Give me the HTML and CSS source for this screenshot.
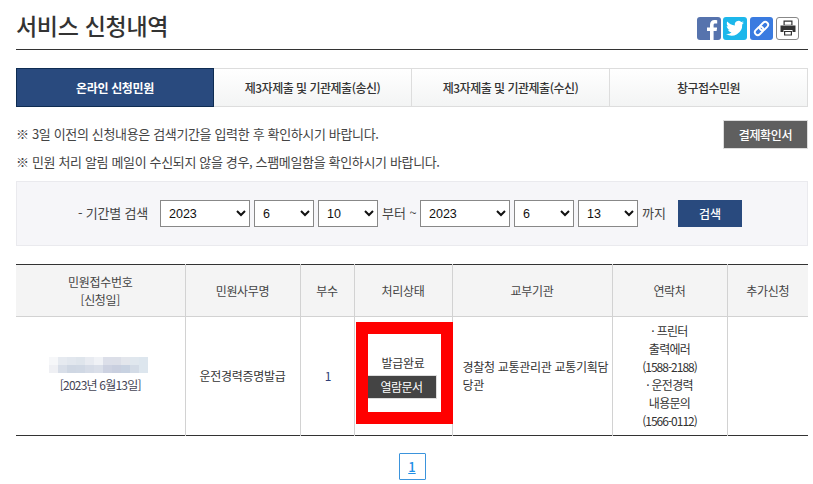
FILE: index.html
```html
<!DOCTYPE html>
<html lang="ko">
<head>
    <meta charset="UTF-8">
    <meta name="viewport" content="width=device-width, initial-scale=1.0">
    <title>서비스 신청내역</title>
    <link rel="stylesheet" href="styles.css">
</head>
<body>
    <div class="page">
        <div class="title-bar">
            <h2 class="page-title">서비스 신청내역</h2>
            <div class="share">
                <span class="share-btn fb">
                    <svg viewBox="0 0 24 24" width="24" height="24"><path fill="#fff" d="M16.6 24v-9h3l.5-3.6h-3.500V9.200c0-1 .3-1.700 1.800-1.700h1.800V4.300c-.4 0-1.500-.2-2.700-.2-2.700 0-4.500 1.700-4.500 4.600v2.700h-3V15h3v9z"/></svg>
                </span>
                <span class="share-btn tw">
                    <svg viewBox="0 0 24 24" width="24" height="24"><path fill="#fff" d="M21 6.600c-.7.300-1.400.5-2.100.6.800-.5 1.300-1.200 1.600-2-.7.400-1.500.7-2.300.9a3.700 3.700 0 0 0-6.300 3.400C8.800 9.300 6.100 7.800 4.300 5.600c-1 1.700-.5 3.800 1.100 4.900-.6 0-1.200-.2-1.700-.5 0 1.800 1.300 3.300 3 3.700-.5.100-1.100.2-1.700.1.500 1.500 1.800 2.500 3.500 2.600A7.500 7.500 0 0 1 3 17.900a10.500 10.500 0 0 0 16.200-9.300c.7-.5 1.300-1.200 1.800-2z"/></svg>
                </span>
                <span class="share-btn link">
                    <svg viewBox="0 0 24 24" width="23" height="23"><g fill="none" stroke="#fff" stroke-width="2" transform="rotate(-45 12 12)"><rect x="3.500" y="9" width="10" height="6" rx="3"/><rect x="10.500" y="9" width="10" height="6" rx="3"/></g></svg>
                </span>
                <span class="share-btn print">
                    <svg viewBox="0 0 20 20" width="20" height="20"><path fill="#333" d="M5.500 2.500h9v4.500h-9zM6.700 3.700v3h6.600v-3z" fill-rule="evenodd"/><path fill="#333" d="M2.500 7.500h15v6.500h-3v-2h-9v2h-3z"/><path fill="#333" d="M6 13h8v4.500H6zM7.200 14v2.500h5.600V14z" fill-rule="evenodd"/></svg>
                </span>
            </div>
        </div>

        <ul class="tabs">
            <li class="tab active">온라인 신청민원</li>
            <li class="tab">제3자제출 및 기관제출(송신)</li>
            <li class="tab">제3자제출 및 기관제출(수신)</li>
            <li class="tab">창구접수민원</li>
        </ul>

        <div class="notice">
            <div class="notice-text">
                <p>※ 3일 이전의 신청내용은 검색기간을 입력한 후 확인하시기 바랍니다.</p>
                <p>※ 민원 처리 알림 메일이 수신되지 않을 경우, 스팸메일함을 확인하시기 바랍니다.</p>
            </div>
            <button class="receipt-btn" type="button">결제확인서</button>
        </div>

        <form class="search-box">
            <span class="search-label">- 기간별 검색</span>
            <select class="sel-year"><option>2023</option></select>
            <select class="sel-small"><option>6</option></select>
            <select class="sel-small"><option>10</option></select>
            <span class="search-word from">부터 ~</span>
            <select class="sel-year"><option>2023</option></select>
            <select class="sel-small"><option>6</option></select>
            <select class="sel-small"><option>13</option></select>
            <span class="search-word to">까지</span>
            <button class="search-btn" type="button">검색</button>
        </form>

        <div class="table-wrap">
            <table class="list">
                <colgroup>
                    <col class="c1"><col class="c2"><col class="c3"><col class="c4"><col class="c5"><col class="c6"><col class="c7">
                </colgroup>
                <thead>
                    <tr>
                        <th>민원접수번호<br>[신청일]</th>
                        <th>민원사무명</th>
                        <th>부수</th>
                        <th>처리상태</th>
                        <th>교부기관</th>
                        <th>연락처</th>
                        <th>추가신청</th>
                    </tr>
                </thead>
                <tbody>
                    <tr>
                        <td>
                            <div class="mosaic">
                                <i style="background:#f6f7f9"></i><i style="background:#e6eaf0"></i><i style="background:#e2e7ee"></i><i style="background:#dfe5ec"></i><i style="background:#e8ebf1"></i><i style="background:#f0f2f6"></i><i style="background:#dcdfe9"></i><i style="background:#dcdfe8"></i><i style="background:#e3e6ec"></i><i style="background:#e0e7ee"></i><i style="background:#dde6ee"></i>
                                <i style="background:#eff0f4"></i><i style="background:#d8dee8"></i><i style="background:#cfd7e3"></i><i style="background:#d0d8e4"></i><i style="background:#d6dce7"></i><i style="background:#dadfe9"></i><i style="background:#cdd2e1"></i><i style="background:#c9cfdf"></i><i style="background:#c8d2e1"></i><i style="background:#d3dbe6"></i><i style="background:#dde6ee"></i>
                            </div>
                            <div class="date">[2023년 6월13일]</div>
                        </td>
                        <td>운전경력증명발급</td>
                        <td class="count">1</td>
                        <td>
                            <div class="status">발급완료</div>
                            <button class="view-btn" type="button">열람문서</button>
                        </td>
                        <td class="agency">경찰청 교통관리관 교통기획담당관</td>
                        <td class="contact">· 프린터<br>출력에러<br><span class="tel">(1588-2188)</span><br>· 운전경력<br>내용문의<br><span class="tel">(1566-0112)</span></td>
                        <td></td>
                    </tr>
                </tbody>
            </table>
            <div class="highlight"></div>
        </div>

        <div class="paging"><a class="page-num" href="#">1</a></div>
    </div>
</body>
</html>
```

FILE: styles.css
```css
* {
    box-sizing: border-box;
}

body {
    margin: 0;
    background: #fff;
    color: #333;
    font-family: "Noto Sans CJK KR", "Noto Sans", sans-serif;
    font-size: 12px;
    overflow: hidden;
}

.page {
    width: 792px;
    margin-left: 16px;
}

.title-bar {
    display: flex;
    justify-content: space-between;
    align-items: center;
    height: 50px;
    padding: 5px 0 5px;
    border-bottom: 1px solid #333;
}

.page-title {
    margin: 0;
    font-size: 23px;
    font-weight: 500;
    line-height: 34px;
    letter-spacing: -0.3px;
    color: #333;
}

.share {
    display: flex;
    gap: 3px;
    margin-top: 7px;
    margin-right: 9px;
}

.share-btn {
    display: flex;
    align-items: center;
    justify-content: center;
    width: 24px;
    height: 23px;
    border-radius: 3px;
    overflow: hidden;
}

.fb { background: #5673ad; align-items: flex-end; margin-right: -1px; }
.tw { background: #1cb7eb; }
.link { background: #3a7be0; width: 23px; }
.print {
    background: #fff;
    border: 1px solid #888;
    width: 23px;
}

.tabs {
    display: flex;
    height: 39px;
    margin: 18px 0 0;
    padding: 0;
    list-style: none;
    border: 1px solid #ddd;
    border-left: 0;
}

.tab {
    flex: 0 0 198px;
    display: flex;
    align-items: center;
    justify-content: center;
    border-right: 1px solid #ddd;
    background: linear-gradient(#fff, #f3f4f4);
    font-size: 12px;
    font-weight: 500;
    letter-spacing: -0.5px;
    color: #333;
}

.tab:last-child {
    flex-basis: 197px;
    border-right: 0;
}

.tab.active {
    margin: -1px 0;
    height: 39px;
    border: 1px solid #0e2c52;
    background: #294a7e;
    color: #fff;
    font-weight: 700;
    letter-spacing: -0.35px;
}

.notice {
    display: flex;
    justify-content: space-between;
    align-items: flex-start;
    margin-top: 13px;
    height: 61px;
}

.notice-text p {
    margin: 0;
    height: 28px;
    line-height: 28px;
    font-size: 13px;
    letter-spacing: -0.35px;
    color: #444;
}

.receipt-btn {
    width: 85px;
    height: 29px;
    border: 1px solid #ddd;
    background: #5f5f5f;
    color: #fff;
    font: 500 12px "Noto Sans CJK KR", sans-serif;
    letter-spacing: -0.3px;
}

.search-box {
    display: flex;
    align-items: center;
    height: 65px;
    padding-left: 61px;
    background: #f6f6f9;
    border: 1px solid #eaeaee;
    font-size: 13px;
}

.search-label {
    width: 82px;
    margin-top: -2px;
    letter-spacing: -0.2px;
    white-space: nowrap;
    color: #444;
}

.search-box select {
    height: 27px;
    margin-right: 4px;
    padding: 0 0 0 4px;
    border: 1px solid #888;
    border-radius: 0;
    background: #fff;
    font-family: "Liberation Sans", Arial, sans-serif;
    font-size: 12.5px;
    color: #111;
}

.search-box .sel-year { width: 90px; }
.search-box .sel-small { width: 60px; }

.search-word {
    margin-top: -3px;
    color: #444;
    white-space: nowrap;
}

.from { width: 38px; }
.to { width: 36px; }

.search-btn {
    width: 64px;
    height: 27px;
    border: 0;
    background: #294a7e;
    color: #fff;
    font: 500 12px "Noto Sans CJK KR", sans-serif;
}

.table-wrap {
    position: relative;
    margin-top: 18px;
}

.list {
    width: 792px;
    table-layout: fixed;
    border-collapse: collapse;
    border-top: 1px solid #333;
    border-bottom: 1px solid #333;
    letter-spacing: -0.3px;
}

.c1 { width: 169px; }
.c2 { width: 115px; }
.c3 { width: 54px; }
.c4 { width: 98px; }
.c5 { width: 160px; }
.c6 { width: 115px; }
.c7 { width: 81px; }

.list th,
.list td {
    border-right: 1px solid #d2d2d2;
    text-align: center;
    vertical-align: middle;
}

.list th:last-child,
.list td:last-child {
    border-right: 0;
}

.list th {
    height: 52px;
    padding: 0;
    background: #f4f4f4;
    border-bottom: 1px solid #d2d2d2;
    font-weight: 400;
    line-height: 18px;
    color: #444;
}

.list td {
    height: 119px;
    padding: 0 4px;
    line-height: 18px;
    color: #333;
}

.mosaic {
    display: grid;
    grid-template-columns: repeat(11, 9px);
    grid-auto-rows: 8px;
    width: 99px;
    margin: -2px 0 0 29px;
}

.date {
    margin-top: 3px;
    letter-spacing: -0.8px;
    line-height: 17px;
    color: #445;
}

.list .count {
    padding-left: 6px;
    color: #2f3f78;
}

.status {
    line-height: 18px;
}

.view-btn {
    display: block;
    width: 69px;
    height: 24px;
    margin: 3px 0 0 9px;
    border: 1px solid #ddd;
    border-left: 0;
    background: #444;
    color: #fff;
    font: 400 12px "Noto Sans CJK KR", sans-serif;
    letter-spacing: -0.6px;
}

.list .agency {
    padding: 0 3px 0 10px;
    text-align: left;
}

.contact {
    letter-spacing: -0.7px;
}

.tel {
    letter-spacing: -1px;
}

.highlight {
    position: absolute;
    left: 340px;
    top: 58px;
    width: 97px;
    height: 102px;
    border: 12px solid #f00;
}

.paging {
    display: flex;
    justify-content: center;
    margin-top: 17px;
}

.page-num {
    display: block;
    width: 27px;
    height: 27px;
    border: 1px solid #3b94dc;
    border-radius: 1px;
    color: #1f8fe6;
    font-weight: 500;
    font-size: 13px;
    line-height: 26px;
    text-align: center;
}
```
